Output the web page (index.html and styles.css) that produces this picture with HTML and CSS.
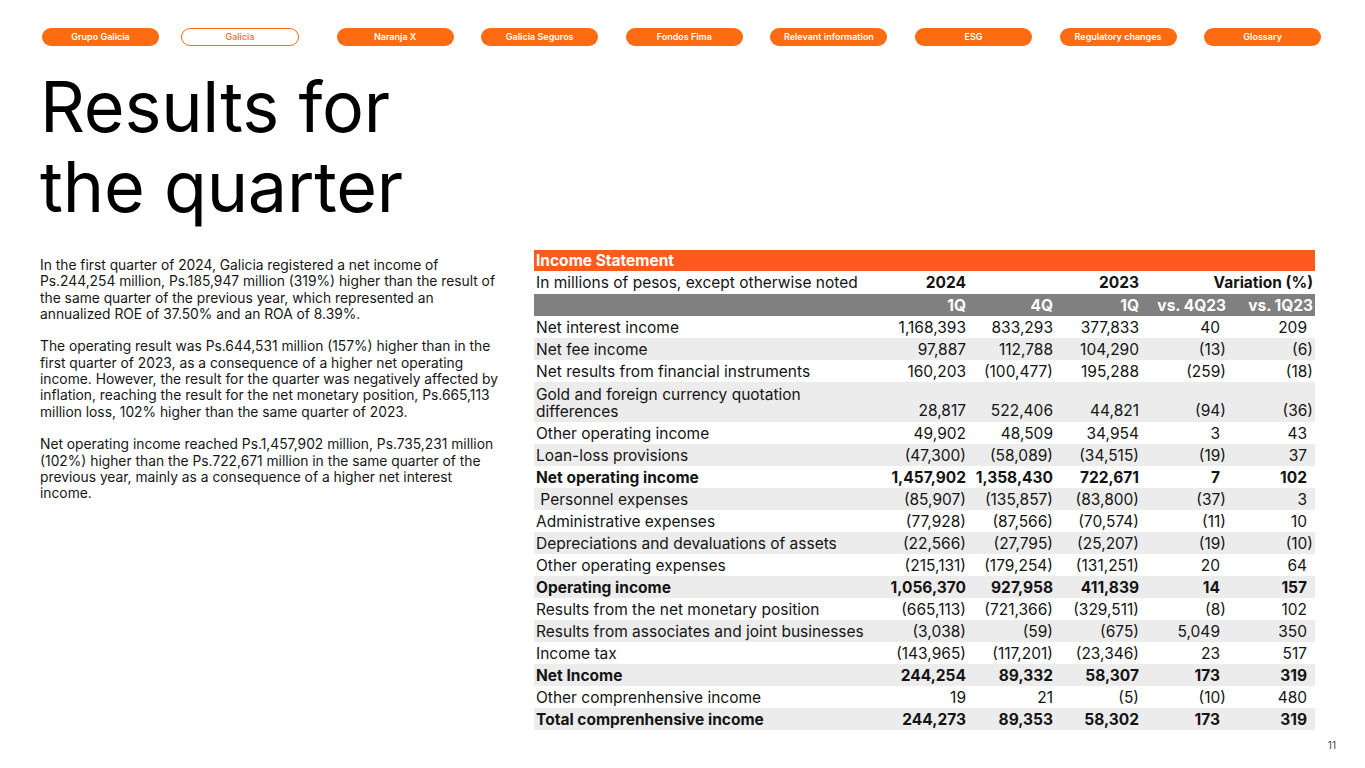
FILE: index.html
```html
<!DOCTYPE html>
<html lang="en">
<head>
<meta charset="utf-8">
<title>Results for the quarter</title>
<link rel="stylesheet" href="styles.css">
</head>
<body>
<div class="page">
  <nav class="nav">
    <span class="pill">Grupo Galicia</span>
    <span class="pill pill-active">Galicia</span>
    <span class="pill">Naranja X</span>
    <span class="pill">Galicia Seguros</span>
    <span class="pill">Fondos Fima</span>
    <span class="pill">Relevant information</span>
    <span class="pill">ESG</span>
    <span class="pill">Regulatory changes</span>
    <span class="pill">Glossary</span>
  </nav>

  <h1 class="title">Results for<br>the quarter</h1>

  <div class="main">
    <div class="text">
      <p>In the first quarter of 2024, Galicia registered a net income of Ps.244,254 million, Ps.185,947 million (319%) higher than the result of the same quarter of the previous year, which represented an annualized ROE of 37.50% and an ROA of 8.39%.</p>
      <p>The operating result was Ps.644,531 million (157%) higher than in the first quarter of 2023, as a consequence of a higher net operating income. However, the result for the quarter was negatively affected by inflation, reaching the result for the net monetary position, Ps.665,113 million loss, 102% higher than the same quarter of 2023.</p>
      <p>Net operating income reached Ps.1,457,902 million, Ps.735,231 million (102%) higher than the Ps.722,671 million in the same quarter of the previous year, mainly as a consequence of a higher net interest income.</p>
    </div>

    <table class="fin">
      <colgroup>
        <col class="c-label"><col class="c1"><col class="c2"><col class="c3"><col class="c4"><col class="c5">
      </colgroup>
      <thead>
        <tr class="r-title"><th colspan="6">Income Statement</th></tr>
        <tr class="r-years">
          <td>In millions of pesos, except otherwise noted</td>
          <th>2024</th><th></th><th>2023</th><th colspan="2">Variation (%)</th>
        </tr>
        <tr class="r-q">
          <th></th><th>1Q</th><th>4Q</th><th>1Q</th><th>vs. 4Q23</th><th>vs. 1Q23</th>
        </tr>
      </thead>
      <tbody>
        <tr><td>Net interest income</td><td>1,168,393</td><td>833,293</td><td>377,833</td><td class="p">40</td><td class="p">209</td></tr>
        <tr class="s"><td>Net fee income</td><td>97,887</td><td>112,788</td><td>104,290</td><td>(13)</td><td>(6)</td></tr>
        <tr><td>Net results from financial instruments</td><td>160,203</td><td>(100,477)</td><td>195,288</td><td>(259)</td><td>(18)</td></tr>
        <tr class="s tall"><td>Gold and foreign currency quotation differences</td><td>28,817</td><td>522,406</td><td>44,821</td><td>(94)</td><td>(36)</td></tr>
        <tr><td>Other operating income</td><td>49,902</td><td>48,509</td><td>34,954</td><td class="p">3</td><td class="p">43</td></tr>
        <tr class="s"><td>Loan-loss provisions</td><td>(47,300)</td><td>(58,089)</td><td>(34,515)</td><td>(19)</td><td class="p">37</td></tr>
        <tr class="b"><td>Net operating income</td><td>1,457,902</td><td>1,358,430</td><td>722,671</td><td class="p">7</td><td class="p">102</td></tr>
        <tr class="s"><td>&nbsp;Personnel expenses</td><td>(85,907)</td><td>(135,857)</td><td>(83,800)</td><td>(37)</td><td class="p">3</td></tr>
        <tr><td>Administrative expenses</td><td>(77,928)</td><td>(87,566)</td><td>(70,574)</td><td>(11)</td><td class="p">10</td></tr>
        <tr class="s"><td>Depreciations and devaluations of assets</td><td>(22,566)</td><td>(27,795)</td><td>(25,207)</td><td>(19)</td><td>(10)</td></tr>
        <tr><td>Other operating expenses</td><td>(215,131)</td><td>(179,254)</td><td>(131,251)</td><td class="p">20</td><td class="p">64</td></tr>
        <tr class="s b"><td>Operating income</td><td>1,056,370</td><td>927,958</td><td>411,839</td><td class="p">14</td><td class="p">157</td></tr>
        <tr><td>Results from the net monetary position</td><td>(665,113)</td><td>(721,366)</td><td>(329,511)</td><td>(8)</td><td class="p">102</td></tr>
        <tr class="s"><td>Results from associates and joint businesses</td><td>(3,038)</td><td>(59)</td><td>(675)</td><td class="p">5,049</td><td class="p">350</td></tr>
        <tr><td>Income tax</td><td>(143,965)</td><td>(117,201)</td><td>(23,346)</td><td class="p">23</td><td class="p">517</td></tr>
        <tr class="s b"><td>Net Income</td><td>244,254</td><td>89,332</td><td>58,307</td><td class="p">173</td><td class="p">319</td></tr>
        <tr><td>Other comprenhensive income</td><td>19</td><td>21</td><td>(5)</td><td>(10)</td><td class="p">480</td></tr>
        <tr class="s b"><td>Total comprenhensive income</td><td>244,273</td><td>89,353</td><td>58,302</td><td class="p">173</td><td class="p">319</td></tr>
      </tbody>
    </table>
  </div>

  <footer class="footer">11</footer>
</div>
</body>
</html>
```

FILE: styles.css
```css
* { box-sizing: border-box; }
html, body { margin: 0; padding: 0; background: #ffffff; }
body {
  font-family: Inter, "Noto Sans", "Liberation Sans", sans-serif;
  color: #141414;
}
.page {
  width: 1365px;
  height: 768px;
  overflow: hidden;
  padding-top: 28px;
}
.nav {
  display: flex;
  gap: 27.6px;
  padding-left: 42px;
}
.pill {
  width: 117px;
  height: 18px;
  border-radius: 9px;
  background: #ff6b10;
  color: #ffffff;
  font-size: 9px;
  font-weight: 600;
  line-height: 18px;
  text-align: center;
}
.pill-active {
  width: 118px;
  margin-left: -5.6px;
  margin-right: 10px;
  background: #ffffff;
  color: #ff6b10;
  border: 1.5px solid #ff6b10;
  line-height: 15px;
  font-weight: 500;
}
.title {
  margin: 21px 0 0 40px;
  font-size: 70px;
  font-weight: 400;
  line-height: 80px;
  letter-spacing: -0.2px;
  color: #000000;
}
.main {
  display: flex;
  align-items: flex-start;
  margin-top: 23px;
}
.text {
  width: 462px;
  margin-left: 40px;
  margin-right: 8px;
  margin-top: 7px;
  font-size: 13.8px;
  line-height: 16.3px;
  color: #161616;
}
.text p { margin: 0 0 16.3px 0; }
.fin {
  margin-left: 24px;
  width: 781px;
  table-layout: fixed;
  border-collapse: collapse;
  font-size: 15.5px;
  color: #141414;
}
.c-label { width: 336px; }
.c1 { width: 98px; }
.c2 { width: 87px; }
.c3 { width: 86px; }
.c4 { width: 87px; }
.c5 { width: 87px; }
.fin td, .fin th {
  height: 22px;
  padding: 1px 2px 0;
  text-align: right;
  white-space: nowrap;
  line-height: 18px;
}
.fin td:first-child { text-align: left; }
.fin th { font-weight: 700; }
.r-title th {
  height: 21px;
  background: #ff5a1e;
  color: #ffffff;
  text-align: left;
}
.r-years td, .r-years th { height: 23px; }
.r-q th {
  background: #808080;
  color: #ffffff;
}
.fin tbody tr.s td { background: #ececec; }
.fin tbody tr.b td { font-weight: 700; }
.fin td.p { padding-right: 8px; }
.fin tr.tall td {
  height: 40px;
  vertical-align: bottom;
  padding-bottom: 2px;
}
.fin tr.tall td:first-child {
  white-space: normal;
  line-height: 16.5px;
}
.footer {
  margin-top: 9px;
  padding-right: 29px;
  text-align: right;
  font-size: 10px;
  color: #444444;
}
```
